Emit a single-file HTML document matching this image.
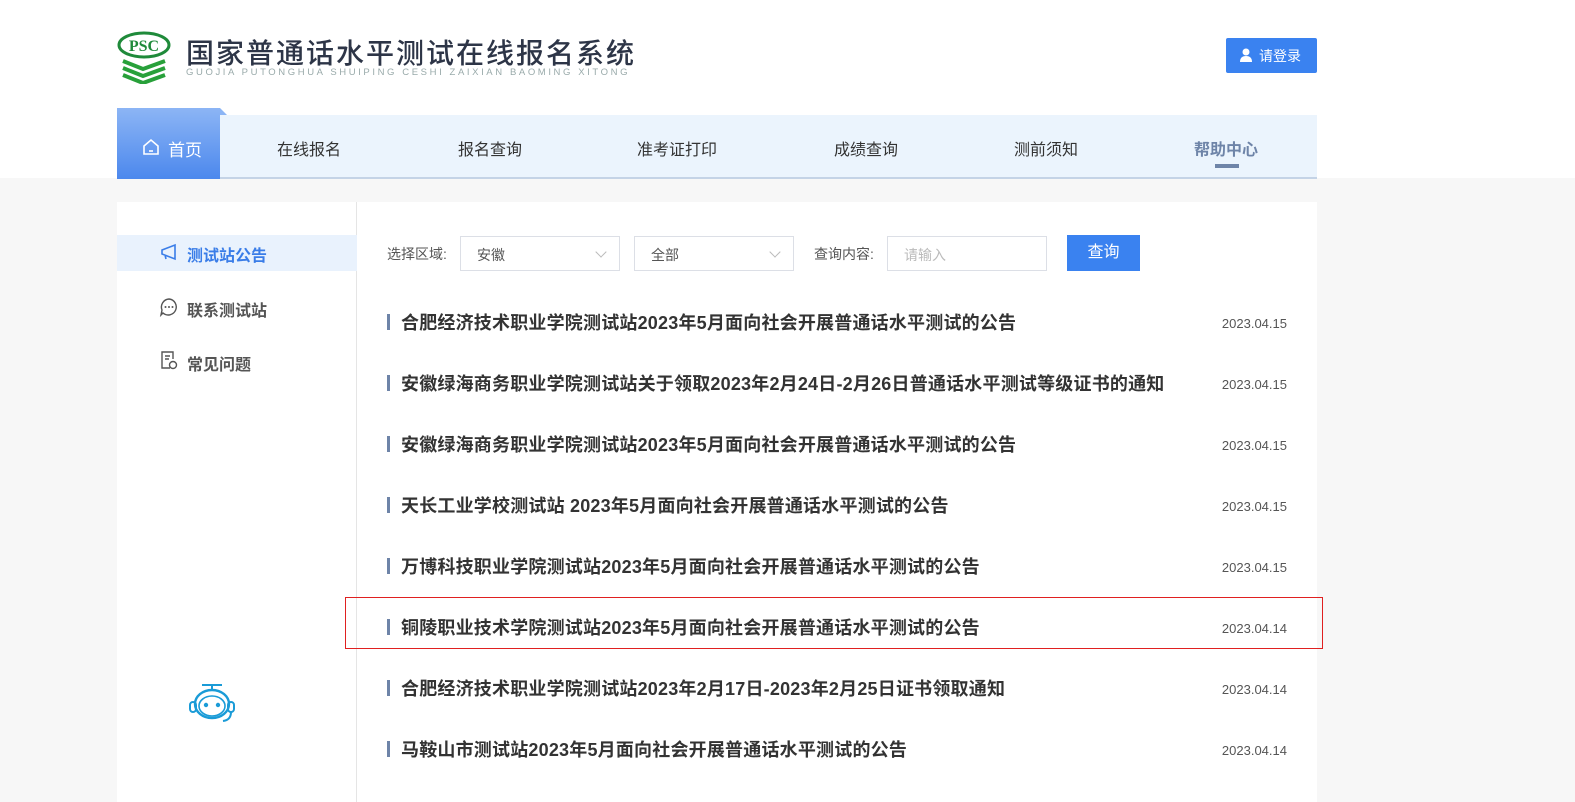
<!DOCTYPE html>
<html><head><meta charset="utf-8"><style>
*{margin:0;padding:0;box-sizing:border-box}
body{width:1575px;height:789px;overflow:hidden;background:#f7f7f7;font-family:"Liberation Sans","Noto Sans CJK SC",sans-serif;position:relative}
.top{position:absolute;left:0;top:0;width:1575px;height:178px;background:#fff}
.abs{position:absolute}
.nav{position:absolute;left:117px;top:115px;width:1200px;height:64px;background:#ebf4fd;border-bottom:2px solid #c4d3e6}
.nav span{position:absolute;top:21px;font-size:16px;color:#333}
.home{position:absolute;left:117px;top:108px;width:103px;height:71px;background:linear-gradient(#8cb5f5,#4c88ed);color:#fff}
.card{position:absolute;left:117px;top:202px;width:1200px;height:600px;background:#fff}
.side{position:absolute;left:117px;top:202px;width:240px;height:600px;border-right:1px solid #e5e5e5}
.si{position:absolute;left:187px;font-size:16px;font-weight:bold;color:#555}
.row{position:absolute;left:387px;width:900px;height:20px}
.row b{position:absolute;left:0;top:2px;width:3px;height:16px;background:#6e84a8}
.row .t{position:absolute;left:14px;top:-3px;font-size:18px;letter-spacing:0.2px;font-weight:bold;color:#333;white-space:nowrap}
.row .d{position:absolute;right:0;top:4px;font-size:13px;color:#555}
.sel{position:absolute;top:236px;height:35px;border:1px solid #dcdfe6;font-size:14px;color:#555;padding:8px 16px}
.chev{position:absolute;right:14px;top:11px;width:8px;height:8px;border-right:1px solid #bbb;border-bottom:1px solid #bbb;transform:rotate(45deg)}
</style></head><body>
<div class="top"></div>
<svg class="abs" style="left:115px;top:30px" width="60" height="54" viewBox="0 0 60 54">
<ellipse cx="29" cy="15" rx="25" ry="12" fill="none" stroke="#1f8a3a" stroke-width="3"/>
<text x="29" y="21" text-anchor="middle" font-family="Liberation Serif" font-weight="bold" font-size="16" fill="#1f8a3a">PSC</text>
<path d="M8 31 L28 39 L50 31 M8 38 L28 46 L50 38 M8 45 L28 53 L50 45" stroke="#28a03a" stroke-width="4" fill="none"/>
</svg>
<div class="abs" style="left:186px;top:34px;font-size:28px;color:#2d3547;letter-spacing:2px;font-family:'Noto Sans CJK SC',sans-serif;font-weight:500;line-height:36px">国家普通话水平测试在线报名系统</div>
<div class="abs" style="left:186px;top:67px;font-size:9.5px;color:#9aa;letter-spacing:2.6px">GUOJIA PUTONGHUA SHUIPING CESHI ZAIXIAN BAOMING XITONG</div>
<div class="abs" style="left:1226px;top:38px;width:91px;height:35px;background:#3a82f0;color:#fff;font-size:14px;border-radius:2px">
<svg class="abs" style="left:14px;top:10px" width="12" height="14" viewBox="0 0 12 14"><circle cx="6" cy="4" r="3.5" fill="#fff"/><path d="M0 14 Q0 8 6 8 Q12 8 12 14Z" fill="#fff"/></svg>
<span class="abs" style="left:33px;top:8px">请登录</span></div>
<div class="nav">
<span style="left:160px">在线报名</span><span style="left:341px">报名查询</span><span style="left:520px">准考证打印</span><span style="left:717px">成绩查询</span><span style="left:897px">测前须知</span>
<span style="left:1077px;font-weight:bold;color:#6e84a8">帮助中心</span>
<div class="abs" style="left:1098px;top:49px;width:24px;height:4px;background:#6e84a8"></div>
</div>
<div class="home"><svg class="abs" style="left:25px;top:30px" width="18" height="18" viewBox="0 0 18 18"><path d="M2 8 L9 2 L16 8 V16 H2Z" fill="none" stroke="#fff" stroke-width="1.6"/><path d="M7 13H11" stroke="#fff" stroke-width="1.6"/></svg><span class="abs" style="left:51px;top:28px;font-size:17px">首页</span></div>
<div class="abs" style="left:220px;top:108px;width:0;height:0;border-left:7px solid #8cb5f5;border-top:7px solid transparent"></div>
<div class="card"></div>
<div class="side"></div>
<div class="abs" style="left:117px;top:235px;width:240px;height:36px;background:#e9f2fd"></div>
<svg class="abs" style="left:160px;top:243px" width="18" height="18" viewBox="0 0 18 18"><path d="M2 7 L15 2 V16 L2 11Z M2 7 V11 M5 12 L6 16" fill="none" stroke="#3a7de8" stroke-width="1.6"/></svg>
<div class="si" style="top:242px;color:#3a7de8">测试站公告</div>
<svg class="abs" style="left:159px;top:297px" width="20" height="20" viewBox="0 0 20 20"><path d="M10 2 A8 8 0 1 1 4 16 L2 18 L3 13 A8 8 0 0 1 10 2Z" fill="none" stroke="#555" stroke-width="1.4"/><circle cx="6.5" cy="10" r="1" fill="#555"/><circle cx="10" cy="10" r="1" fill="#555"/><circle cx="13.5" cy="10" r="1" fill="#555"/></svg>
<div class="si" style="top:297px">联系测试站</div>
<svg class="abs" style="left:160px;top:350px" width="18" height="20" viewBox="0 0 18 20"><path d="M10 18 H2 V2 H13 V9" fill="none" stroke="#555" stroke-width="1.4"/><path d="M5 6H10M5 9H9" stroke="#555" stroke-width="1.4"/><circle cx="13" cy="15" r="3.5" fill="none" stroke="#555" stroke-width="1.4"/></svg>
<div class="si" style="top:351px">常见问题</div>
<svg class="abs" style="left:186px;top:682px" width="52" height="42" viewBox="0 0 52 42"><path d="M16 3H36M26 3V8" stroke="#1a9bd7" stroke-width="2"/><ellipse cx="26" cy="22" rx="17" ry="14" fill="none" stroke="#1a9bd7" stroke-width="2.4"/><ellipse cx="26" cy="24" rx="13" ry="10" fill="none" stroke="#1a9bd7" stroke-width="1.6"/><circle cx="20" cy="23" r="2.2" fill="#1a9bd7"/><circle cx="32" cy="23" r="2.2" fill="#1a9bd7"/><rect x="4" y="20" width="6" height="10" rx="3" fill="none" stroke="#1a9bd7" stroke-width="2"/><rect x="42" y="20" width="6" height="10" rx="3" fill="none" stroke="#1a9bd7" stroke-width="2"/><path d="M45 30 Q45 38 37 39" fill="none" stroke="#1a9bd7" stroke-width="2"/></svg>
<div class="abs" style="left:387px;top:244px;font-size:14px;color:#555">选择区域:</div>
<div class="sel" style="left:460px;width:160px">安徽<i class="chev"></i></div>
<div class="sel" style="left:634px;width:160px">全部<i class="chev"></i></div>
<div class="abs" style="left:814px;top:244px;font-size:14px;color:#555">查询内容:</div>
<div class="sel" style="left:887px;width:160px;color:#bbb">请输入</div>
<div class="abs" style="left:1067px;top:235px;width:73px;height:36px;background:#3a82f0;color:#fff;font-size:16px;text-align:center;line-height:36px">查询</div>
<div class="row" style="top:312px"><b></b><span class="t">合肥经济技术职业学院测试站2023年5月面向社会开展普通话水平测试的公告</span><span class="d">2023.04.15</span></div>
<div class="row" style="top:373px"><b></b><span class="t">安徽绿海商务职业学院测试站关于领取2023年2月24日-2月26日普通话水平测试等级证书的通知</span><span class="d">2023.04.15</span></div>
<div class="row" style="top:434px"><b></b><span class="t">安徽绿海商务职业学院测试站2023年5月面向社会开展普通话水平测试的公告</span><span class="d">2023.04.15</span></div>
<div class="row" style="top:495px"><b></b><span class="t">天长工业学校测试站 2023年5月面向社会开展普通话水平测试的公告</span><span class="d">2023.04.15</span></div>
<div class="row" style="top:556px"><b></b><span class="t">万博科技职业学院测试站2023年5月面向社会开展普通话水平测试的公告</span><span class="d">2023.04.15</span></div>
<div class="row" style="top:617px"><b></b><span class="t">铜陵职业技术学院测试站2023年5月面向社会开展普通话水平测试的公告</span><span class="d">2023.04.14</span></div>
<div class="row" style="top:678px"><b></b><span class="t">合肥经济技术职业学院测试站2023年2月17日-2023年2月25日证书领取通知</span><span class="d">2023.04.14</span></div>
<div class="row" style="top:739px"><b></b><span class="t">马鞍山市测试站2023年5月面向社会开展普通话水平测试的公告</span><span class="d">2023.04.14</span></div>
<div class="abs" style="left:345px;top:597px;width:978px;height:52px;border:1.5px solid #e02020"></div>
</body></html>
